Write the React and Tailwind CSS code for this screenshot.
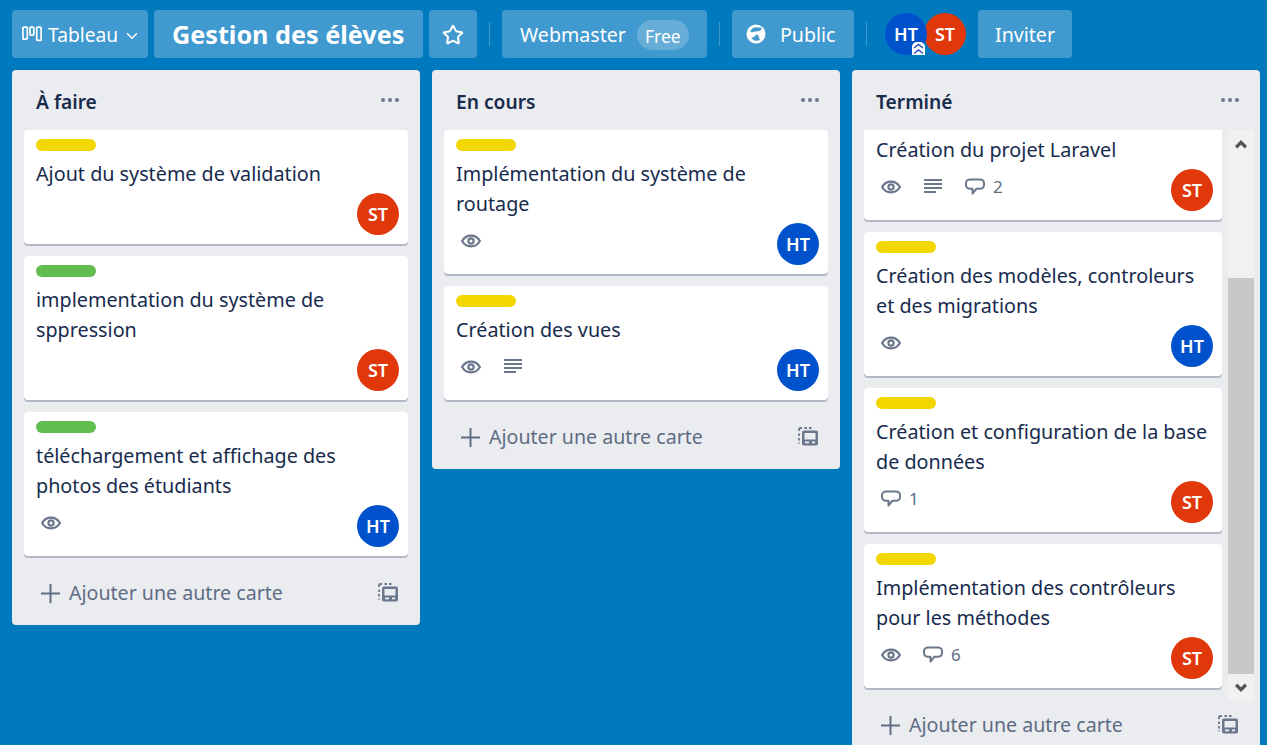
import React from "react";
import { Star, ChevronDown } from "lucide-react";

const EyeIcon = () => (
  <svg width="20" height="20" viewBox="0 0 20 20" fill="none" stroke="#6b778c" strokeWidth="2.200">
    <path d="M1.100 10c2-3.500 5.200-5.400 8.900-5.400s6.900 1.900 8.900 5.400c-2 3.500-5.200 5.400-8.900 5.400S3.100 13.500 1.100 10z" />
    <circle cx="10" cy="10" r="2.600" />
  </svg>
);

const LinesIcon = () => (
  <svg width="20" height="20" viewBox="0 0 20 20" fill="#6b778c">
    <rect x="1" y="2" width="18" height="2" />
    <rect x="1" y="6" width="18" height="2" />
    <rect x="1" y="10" width="18" height="2" />
    <rect x="1" y="14" width="12" height="2" />
  </svg>
);

const CommentIcon = () => (
  <svg width="20" height="20" viewBox="0 0 20 20" fill="none" stroke="#6b778c" strokeWidth="2" strokeLinejoin="round">
    <path d="M5 2.500h10c2.200 0 4 1.500 4 3.700v1.800c0 2.200-1.800 3.700-4 3.700h-3.500L7.500 16.500v-4.800H5c-2.200 0-4-1.500-4-3.700V6.200c0-2.200 1.800-3.700 4-3.700z" />
  </svg>
);

const TemplateIcon = () => (
  <svg width="20" height="20" viewBox="0 0 20 20" fill="none">
    <path d="M1 4V2.500A1.500 1.500 0 0 1 2.500 1H4M6.500 1h2.500M11 1h2.500M1 6.500V9M1 11v2.500M1 15.500V16.500" stroke="#6b778c" strokeWidth="1.800" />
    <rect x="4" y="3.500" width="16" height="15" rx="2" fill="#6b778c" />
    <rect x="6.500" y="6" width="11" height="6.500" fill="#ebecf0" />
    <rect x="7" y="14.500" width="4" height="1.800" fill="#ebecf0" />
    <rect x="14" y="14.500" width="3" height="1.800" fill="#ebecf0" />
  </svg>
);

const BoardIcon = () => (
  <svg width="20" height="16" viewBox="0 0 20 16" fill="none" stroke="#fff" strokeWidth="1.700">
    <rect x="0.900" y="1.100" width="4.400" height="12" rx="1" />
    <rect x="8" y="1.100" width="3.800" height="8" rx="1" />
    <rect x="14.700" y="1.100" width="4.400" height="13.300" rx="1" />
  </svg>
);

const GlobeIcon = () => (
  <svg width="20" height="20" viewBox="0 0 20 20">
    <circle cx="10" cy="10" r="9.500" fill="#fff" />
    <path d="M10 3.200c1.500.5 3.500.3 5.300.3.600 1.600-.4 3-2 3.400-1.700.5-3 .2-4.800.7-1.300.4-2.400 1-3.700.6C4 6.600 6.600 3 10 3.200zM9.500 11.200c1-.8 2.500-.2 3.100 1 .6 1.300.8 2.700 1.200 3.900-1.800.9-4 .9-5.800.1-1.200-.6-2.200-1.500-2.700-2.700 1.600.1 3-.8 4.200-2.300z" fill="#4099cf" />
  </svg>
);

const DotsIcon = () => (
  <svg width="20" height="6" viewBox="0 0 20 6" fill="#6b778c">
    <circle cx="3" cy="3" r="2" />
    <circle cx="10" cy="3" r="2" />
    <circle cx="17" cy="3" r="2" />
  </svg>
);

const PlusIcon = () => (
  <svg width="19" height="19" viewBox="0 0 19 19" fill="#5e6c84" className="mr-[9px] shrink-0">
    <rect x="8.500" y="0" width="2" height="19" />
    <rect x="0" y="8.500" width="19" height="2" />
  </svg>
);

const ScrollArrow = ({ d }) => (
  <svg width="12" height="9" viewBox="0 0 12 9" fill="#555">
    <path d={d} />
  </svg>
);

const Avatar = ({ who }) => (
  <div
    className={`w-[42px] h-[42px] rounded-full flex items-center justify-center text-white text-[18px] font-semibold shrink-0 ${
      who === "HT" ? "bg-[#0052cc]" : "bg-[#e1380b]"
    }`}
  >
    {who}
  </div>
);

const Card = ({ label, title, eye, lines, comments, who }) => (
  <div className="bg-white rounded-[4px] shadow-[0_2px_0_#b3b8c6] pt-[9px] pb-[9px] pl-3 pr-[9px]">
    {label && (
      <div className={`w-[60px] h-3 rounded-full ${label === "green" ? "bg-[#61bd4f]" : "bg-[#f2d600]"}`}></div>
    )}
    <div className="mt-2 text-[19.75px] leading-[30px] text-[#172b4d]">{title}</div>
    <div className="mt-1 flex justify-between items-start">
      <div className="flex items-center gap-[22px] pl-[5px] pt-2 text-[#5e6c84] text-[17px] leading-[20px]">
        {eye && <EyeIcon />}
        {lines && <LinesIcon />}
        {comments && (
          <div className="flex items-center gap-2">
            <CommentIcon />
            <span>{comments}</span>
          </div>
        )}
      </div>
      <Avatar who={who} />
    </div>
  </div>
);

const AddRow = ({ flush }) => (
  <div className={`${flush ? "" : "mt-[13px]"} h-12 mb-2 pl-[29px] pr-[22px] flex items-center text-[#5e6c84] text-[19.6px]`}>
    <PlusIcon />
    <span className="flex-1">Ajouter une autre carte</span>
    <TemplateIcon />
  </div>
);

const ListHeader = ({ title }) => (
  <div className="h-[60px] pl-6 pr-5 flex items-center justify-between">
    <h2 className="text-[19.2px] font-semibold text-[#172b4d] pt-1">{title}</h2>
    <DotsIcon />
  </div>
);

const HeaderBtn = ({ className, children }) => (
  <div className={`h-12 rounded-[4px] bg-[#4099cf] text-white flex items-center shrink-0 ${className}`}>{children}</div>
);

const Sep = () => <div className="w-px h-6 bg-white/25 shrink-0"></div>;

const App = () => {
  const doneCards = [
    { title: "Création du projet Laravel", label: "yellow", eye: true, lines: true, comments: 2, who: "ST" },
    { title: "Création des modèles, controleurs et des migrations", label: "yellow", eye: true, who: "HT" },
    { title: "Création et configuration de la base de données", label: "yellow", comments: 1, who: "ST" },
    { title: "Implémentation des contrôleurs pour les méthodes", label: "yellow", eye: true, comments: 6, who: "ST" },
  ];

  return (
    <div className="h-screen overflow-hidden bg-[#0079bf] font-['Noto_Sans',sans-serif]">
      {/* Board header */}
      <div className="flex items-center pt-[10px] pl-3 h-[58px]">
        <HeaderBtn className="w-[136px] pl-[10px] text-[19.2px]">
          <BoardIcon />
          <span className="ml-[6px] pt-[2px]">Tableau</span>
          <ChevronDown size={18} className="ml-[5px] mt-[3px]" />
        </HeaderBtn>
        <HeaderBtn className="w-[269px] ml-[6px] pl-[18px] text-[25.200px] font-bold">
          <span className="pt-[2px]">Gestion des élèves</span>
        </HeaderBtn>
        <HeaderBtn className="w-12 ml-[6px] justify-center">
          <Star size={22} strokeWidth={2.2} className="mt-[1px]" />
        </HeaderBtn>
        <div className="ml-3"><Sep /></div>
        <HeaderBtn className="w-[205px] ml-3 pl-[18px] text-[19.6px]">
          <span className="pt-[2px]">Webmaster</span>
          <span className="ml-[11px] mt-[2px] w-[52px] h-[30px] rounded-full bg-white/20 flex items-center justify-center text-[17.500px]">
            <span className="pt-[2px]">Free</span>
          </span>
        </HeaderBtn>
        <div className="ml-3"><Sep /></div>
        <HeaderBtn className="w-[122px] ml-3 pl-[14px] text-[19.6px]">
          <GlobeIcon />
          <span className="ml-[14px] pt-[2px]">Public</span>
        </HeaderBtn>
        <div className="ml-3"><Sep /></div>
        <div className="ml-[18px] flex items-center">
          <div className="relative">
            <Avatar who="HT" />
            <div className="absolute bottom-0 left-[27px] w-[13px] h-[13px] rounded-t-[5px] bg-white flex items-center justify-center">
              <svg width="11" height="12" viewBox="0 0 11 12" fill="none" stroke="#2f46b4" strokeWidth="1.500">
                <path d="M1 5l4.500-3.500L10 5M1 10.500L5.500 7l4.500 3.500" />
              </svg>
            </div>
          </div>
          <div className="-ml-[3px]"><Avatar who="ST" /></div>
        </div>
        <HeaderBtn className="w-[94px] ml-3 justify-center text-[19.6px]">
          <span className="pt-[2px]">Inviter</span>
        </HeaderBtn>
      </div>

      {/* Lists */}
      <div className="flex items-start gap-3 pl-3 mt-3">
        <div className="w-[408px] shrink-0 rounded-[4px] bg-[#ebecf0]">
          <ListHeader title="À faire" />
          <div className="flex flex-col gap-3 px-3">
            <Card label="yellow" title="Ajout du système de validation" who="ST" />
            <Card label="green" title="implementation du système de sppression" who="ST" />
            <Card label="green" title="téléchargement et affichage des photos des étudiants" eye who="HT" />
          </div>
          <AddRow />
        </div>

        <div className="w-[408px] shrink-0 rounded-[4px] bg-[#ebecf0]">
          <ListHeader title="En cours" />
          <div className="flex flex-col gap-3 px-3">
            <Card label="yellow" title="Implémentation du système de routage" eye who="HT" />
            <Card label="yellow" title="Création des vues" eye lines who="HT" />
          </div>
          <AddRow />
        </div>

        <div className="w-[408px] shrink-0 rounded-[4px] bg-[#ebecf0]">
          <ListHeader title="Terminé" />
          <div className="flex h-[571px] pl-3">
            <div className="w-[358px] overflow-hidden shrink-0">
              <div className="flex flex-col gap-3 -mt-6">
                {doneCards.map((c, i) => (
                  <Card key={i} {...c} />
                ))}
              </div>
            </div>
            {/* Scrollbar */}
            <div className="ml-[6px] w-[26px] bg-[#f1f1f1] flex flex-col items-center">
              <div className="h-[29px] flex items-center justify-center">
                <ScrollArrow d="M6 0l6 6-2.200 2.500L6 4.700 2.200 8.500 0 6z" />
              </div>
              <div className="w-full mt-[119px] h-[396px] bg-[#c8c8c8]"></div>
              <div className="flex-1 flex items-center justify-center">
                <ScrollArrow d="M6 9L0 3l2.200-2.500L6 4.300 9.800.5 12 3z" />
              </div>
            </div>
          </div>
          <AddRow flush />
        </div>
      </div>
    </div>
  );
};

export default App;
